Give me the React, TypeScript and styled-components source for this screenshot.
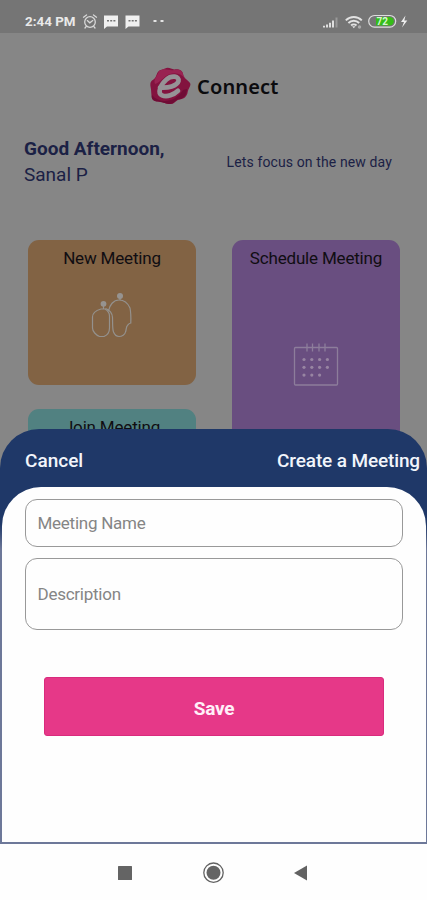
import React from "react";
import styled, { createGlobalStyle } from "styled-components";

const GlobalStyle = createGlobalStyle`
  * { box-sizing: border-box; }
  body { margin: 0; background: #fefefe; font-family: Roboto, "Liberation Sans", sans-serif; }
  button, input, textarea { font-family: inherit; }
`;

const Phone = styled.div`
  position: relative;
  display: flex;
  flex-direction: column;
  width: 427px;
  height: 900px;
  overflow: hidden;
  background: #fefefe;
`;

const StatusBar = styled.header`
  display: flex;
  align-items: center;
  flex: none;
  height: 33px;
  padding: 10px 18px 0 25px;
  background: #757575;
  color: #e9e9e9;
`;

const Clock = styled.span`
  width: 57px;
  font-size: 13.4px;
  font-weight: 700;
  line-height: 20px;
  white-space: nowrap;
`;

const StatusIcons = styled.svg`
  display: block;
  flex: none;
`;

const Spacer = styled.div`
  flex: 1;
`;

const Home = styled.main`
  flex: none;
  height: 811px;
  background: #868686;
`;

const Brand = styled.div`
  display: flex;
  align-items: center;
  height: 42px;
  margin: 33px 0 0 149px;
  gap: 6px;
`;

const BrandName = styled.span`
  font-family: "Noto Sans", sans-serif;
  font-size: 20px;
  font-weight: 600;
  line-height: 28px;
  letter-spacing: 0.15px;
  color: #0b0b0e;
`;

const HomeTop = styled.div`
  display: flow-root;
`;

const Greeting = styled.div`
  display: flex;
  justify-content: space-between;
  align-items: center;
  margin-top: 28px;
  padding: 0 35px 0 24px;
  color: #1b2145;
`;

const Salutation = styled.div`
  font-size: 19px;
  line-height: 26px;
  white-space: nowrap;
`;

const Hello = styled.div`
  font-weight: 700;
`;

const Tagline = styled.div`
  font-size: 14px;
  line-height: 20px;
  letter-spacing: 0.12px;
  white-space: nowrap;
`;

const Cards = styled.div`
  display: grid;
  grid-template-columns: 168px 168px;
  grid-template-rows: 145px 145px;
  gap: 24px 36px;
  margin: 52px 0 0 28px;
`;

const Card = styled.section<{ $color: string; $tall?: boolean }>`
  display: flex;
  flex-direction: column;
  align-items: center;
  grid-row: ${(p) => (p.$tall ? "span 2" : "auto")};
  padding-top: 6px;
  border-radius: 11px;
  background: ${(p) => p.$color};
`;

const CardTitle = styled.h2`
  margin: 0;
  font-size: 17px;
  font-weight: 400;
  line-height: 24px;
  letter-spacing: -0.18px;
  white-space: nowrap;
  color: #100d12;
`;

const CardIcon = styled.svg<{ $top: number }>`
  display: block;
  margin-top: ${(p) => p.$top}px;
`;

const Sheet = styled.div`
  position: absolute;
  top: 429px;
  left: 0;
  width: 427px;
  height: 415px;
  display: flex;
  flex-direction: column;
  border-radius: 39px 39px 0 0;
  background: linear-gradient(#1f3868 95px, #6d7899 120px);
`;

const SheetHeader = styled.div`
  display: flex;
  justify-content: space-between;
  align-items: center;
  flex: none;
  height: 58px;
  padding: 5px 7px 0 25px;
`;

const CancelButton = styled.button`
  padding: 0;
  border: 0;
  background: none;
  color: #f2f5fb;
  font-size: 19px;
  font-weight: 500;
  line-height: 26px;
`;

const SheetTitle = styled.h1`
  margin: 0;
  color: #f2f5fb;
  font-size: 19px;
  font-weight: 500;
  line-height: 26px;
  letter-spacing: -0.13px;
  white-space: nowrap;
`;

const Form = styled.form`
  flex: 1;
  display: flex;
  flex-direction: column;
  margin: 0 1px 2px 2px;
  padding: 12px 23px 0 23px;
  border-radius: 39px 39px 0 0;
  background: #fefefe;
`;

const Field = styled.input<{ $height: number; $gap?: number }>`
  flex: none;
  width: 378px;
  height: ${(p) => p.$height}px;
  margin: 0 0 ${(p) => p.$gap ?? 0}px;
  padding: 0 11.5px;
  border: 1px solid #999;
  border-radius: 12px;
  outline: none;
  background: transparent;
  font-size: 17px;
  letter-spacing: -0.25px;
  color: #333;
  &::placeholder { color: #858585; opacity: 1; }
`;

const SaveButton = styled.button`
  width: 340px;
  height: 59px;
  margin: 0 0 0 19px;
  padding: 3px 0 0;
  border: 1px solid #d92b7d;
  border-radius: 3px;
  background: #e63888;
  color: #fff0f8;
  font-size: 19px;
  font-weight: 700;
  letter-spacing: -0.2px;
`;

const NavBar = styled.nav`
  display: flex;
  align-items: center;
  flex: 1;
  padding: 1px 118px 0 117px;
  justify-content: space-between;
`;

const NavIcon = styled.svg`
  display: block;
`;

const NotificationGlyphs = () => (
  <StatusIcons width="84" height="18" viewBox="0 0 84 18" fill="none">
    <g stroke="#d8d8d8" strokeWidth="1.3" strokeLinecap="round">
      <circle cx="8" cy="9" r="5.3" />
      <path d="M1.5 4.2 4.5 2M14.5 4.2l-3-2.2M4.3 13.4 3 15M11.7 13.4 13 15M5.3 7.6l2.5 2.2 3-2.2" />
    </g>
    <path d="M22 2.5h14v11H25L22 16zM43.5 2.5h14v11h-11l-3 2.500z" fill="#f0f0f0" />
    <path d="M25 7.8h2m1.2 0h2m1.2 0h2M46.500 7.800h2m1.200 0h2m1.200 0h2" stroke="#757575" strokeWidth="1.5" />
    <path d="M71.5 8h3M78.500 8h3" stroke="#e4e4e4" strokeWidth="1.8" />
  </StatusIcons>
);

const DeviceGlyphs = () => (
  <StatusIcons width="88" height="18" viewBox="0 0 88 18" fill="none">
    <path d="M3 14.500v-1.700M6 14.500v-3M9 14.500V9.800M12 14.500V7.500" stroke="#dedede" strokeWidth="2" />
    <path d="M15.500 14.500V4.500" stroke="#999" strokeWidth="2" />
    <g stroke="#e2e2e2" strokeWidth="1.900" transform="translate(.8 0)">
      <path d="M24 7.300c4.500-4.500 11.500-4.500 16 0M26.600 10c3-3 7.800-3 10.800 0M29.300 12.500c1.500-1.500 3.900-1.500 5.400 0" />
      <path d="m30.300 13.200 1.700 2 1.700-2z" fill="#e2e2e2" stroke="none" />
    </g>
    <circle cx="38.500" cy="14" r="1.700" fill="#aaa" />
    <rect x="47.700" y="2.500" width="27" height="11.600" rx="5.800" stroke="#dedede" strokeWidth="1.200" />
    <path d="M55 4h13.500a4.300 4.300 0 0 1 0 8.600H55z" fill="#35bd18" />
    <text x="55.500" y="12" fontFamily="Roboto, sans-serif" fontSize="10" fontWeight="700" fill="#d7f5cf">72</text>
    <path d="m84.500 2.500-4.500 6.400h3L81 14.500l5.300-7h-3l1.200-5z" fill="#f0f0f0" />
  </StatusIcons>
);

const Logo = () => (
  <svg width="42" height="40" viewBox="0 0 42 40" fill="none">
    <path d="M16 1.500c4-2 6 1 9.500.9 5-.4 8 .6 8.800 5.600.6 3.500 4 4.500 6.700 8 1.500 2.500-1.500 5-2.200 8.500-.8 5.500-4.300 7.500-8.300 8-4 .6-5 5-9.500 4.500-4 .5-6-2-10-2.300-5-.3-8.200-1.200-8.500-6.200-.3-3.500-.3-5.500-.8-8C1 17 1 14.500 4.500 12.500 8 10.500 7 5.500 10.500 3.500c2-1 3.500-1 5.500-2z" fill="#83133f" />
    <path d="M10 4c6-4 9 0 15-1 6-.7 9 1 9.300 5.500L37 12c-5-6-13-8-20-3-4 3-7 7-11 8-2-5 2-7 4-13z" fill="#992352" />
    <path d="M3 28c8 10 24 7 31-5l4-1c-.2 7-4 10-9 10.500-3 .5-4 5-9 4.500-5-1-8-2-11-2.400C4 34.500 2 32 3 28z" fill="#6f0c35" />
    <path d="M11 20.500c8 .7 17-1.500 18.500-6.500 1-5-7-6-12-1.500C11.500 17.500 8 26 13 28.300c5 2.200 12-.6 16-4.500" stroke="#969296" strokeWidth="4.700" strokeLinecap="round" />
  </svg>
);

const PeopleIcon = () => (
  <CardIcon $top={22} width="42" height="50" viewBox="0 0 42 50" fill="none">
    <g stroke="#94918d" strokeWidth="1.200">
      <path d="M10 17h4c2.500 1.500 4.500 3.500 4.500 7v12c0 4.500-3 7.500-5.500 8.500H8.500C5 43 1.500 39.500 1.500 36V25c0-4 3.500-6.500 8.500-8z" />
      <path d="M17.500 19c1-6 5-11 10.500-11s9 3.500 11 8c.8 4 .9 12 .8 15-2 .4-2.500 1-3.300 2.400-1.500 1-1 4-2 6.600-.5 2.500-3.500 4.500-6.500 4.500s-4.500-2-5.500-4.500c-1.200-3-.8-9-1-14.500 0-4-3-8-7-9" />
    </g>
    <circle cx="12.500" cy="11.800" r="2.900" fill="#969390" />
    <circle cx="29" cy="4" r="3" fill="#969390" />
    <path d="M12.500 13v4M29 6v2" stroke="#969390" strokeWidth="1.200" />
  </CardIcon>
);

const dots = [0, 1, 2].flatMap((row) =>
  [0, 1, 2, 3].filter((col) => row < 2 || col < 3).map((col) => ({ x: 11 + col * 7.8, y: 16.500 + row * 7.8 }))
);

const CalendarIcon = () => (
  <CardIcon $top={73} width="46" height="44" viewBox="0 0 46 44" fill="none">
    <rect x="1.500" y="4.500" width="43" height="37.500" rx="1" stroke="#8d7d9b" strokeWidth="1.300" />
    <path d="M14 .500v8M19.500.500v8M26 .500v8M32 .500v8" stroke="#8d7d9b" strokeWidth="1.300" />
    {dots.map((d) => (
      <circle key={`${d.x}-${d.y}`} cx={d.x} cy={d.y} r="1.600" fill="#9885a2" />
    ))}
  </CardIcon>
);

export default function App() {
  return (
    <Phone>
      <GlobalStyle />
      <StatusBar>
        <Clock>2:44 PM</Clock>
        <NotificationGlyphs />
        <Spacer />
        <DeviceGlyphs />
      </StatusBar>
      <Home>
        <HomeTop>
          <Brand>
            <Logo />
            <BrandName>Connect</BrandName>
          </Brand>
        </HomeTop>
        <Greeting>
          <Salutation>
            <Hello>Good Afternoon,</Hello>
            <div>Sanal P</div>
          </Salutation>
          <Tagline>Lets focus on the new day</Tagline>
        </Greeting>
        <Cards>
          <Card $color="#826344">
            <CardTitle>New Meeting</CardTitle>
            <PeopleIcon />
          </Card>
          <Card $color="#694e80" $tall>
            <CardTitle>Schedule Meeting</CardTitle>
            <CalendarIcon />
          </Card>
          <Card $color="#518181">
            <CardTitle>Join Meeting</CardTitle>
          </Card>
        </Cards>
      </Home>
      <Sheet>
        <SheetHeader>
          <CancelButton type="button">Cancel</CancelButton>
          <SheetTitle>Create a Meeting</SheetTitle>
        </SheetHeader>
        <Form>
          <Field $height={48} $gap={11} placeholder="Meeting Name" />
          <Field $height={72} $gap={47} placeholder="Description" />
          <SaveButton type="button">Save</SaveButton>
        </Form>
      </Sheet>
      <NavBar>
        <NavIcon width="16" height="16" viewBox="0 0 16 16">
          <rect x="1" y="1" width="14" height="14" rx=".5" fill="#646464" />
        </NavIcon>
        <NavIcon width="22" height="22" viewBox="0 0 22 22">
          <circle cx="11.5" cy="10.7" r="9.700" fill="none" stroke="#626262" strokeWidth="1.300" />
          <circle cx="11.5" cy="10.7" r="7" fill="#646464" />
        </NavIcon>
        <NavIcon width="16" height="16" viewBox="0 0 16 16">
          <path d="M1 8 14 .500v15z" fill="#626262" />
        </NavIcon>
      </NavBar>
    </Phone>
  );
}
